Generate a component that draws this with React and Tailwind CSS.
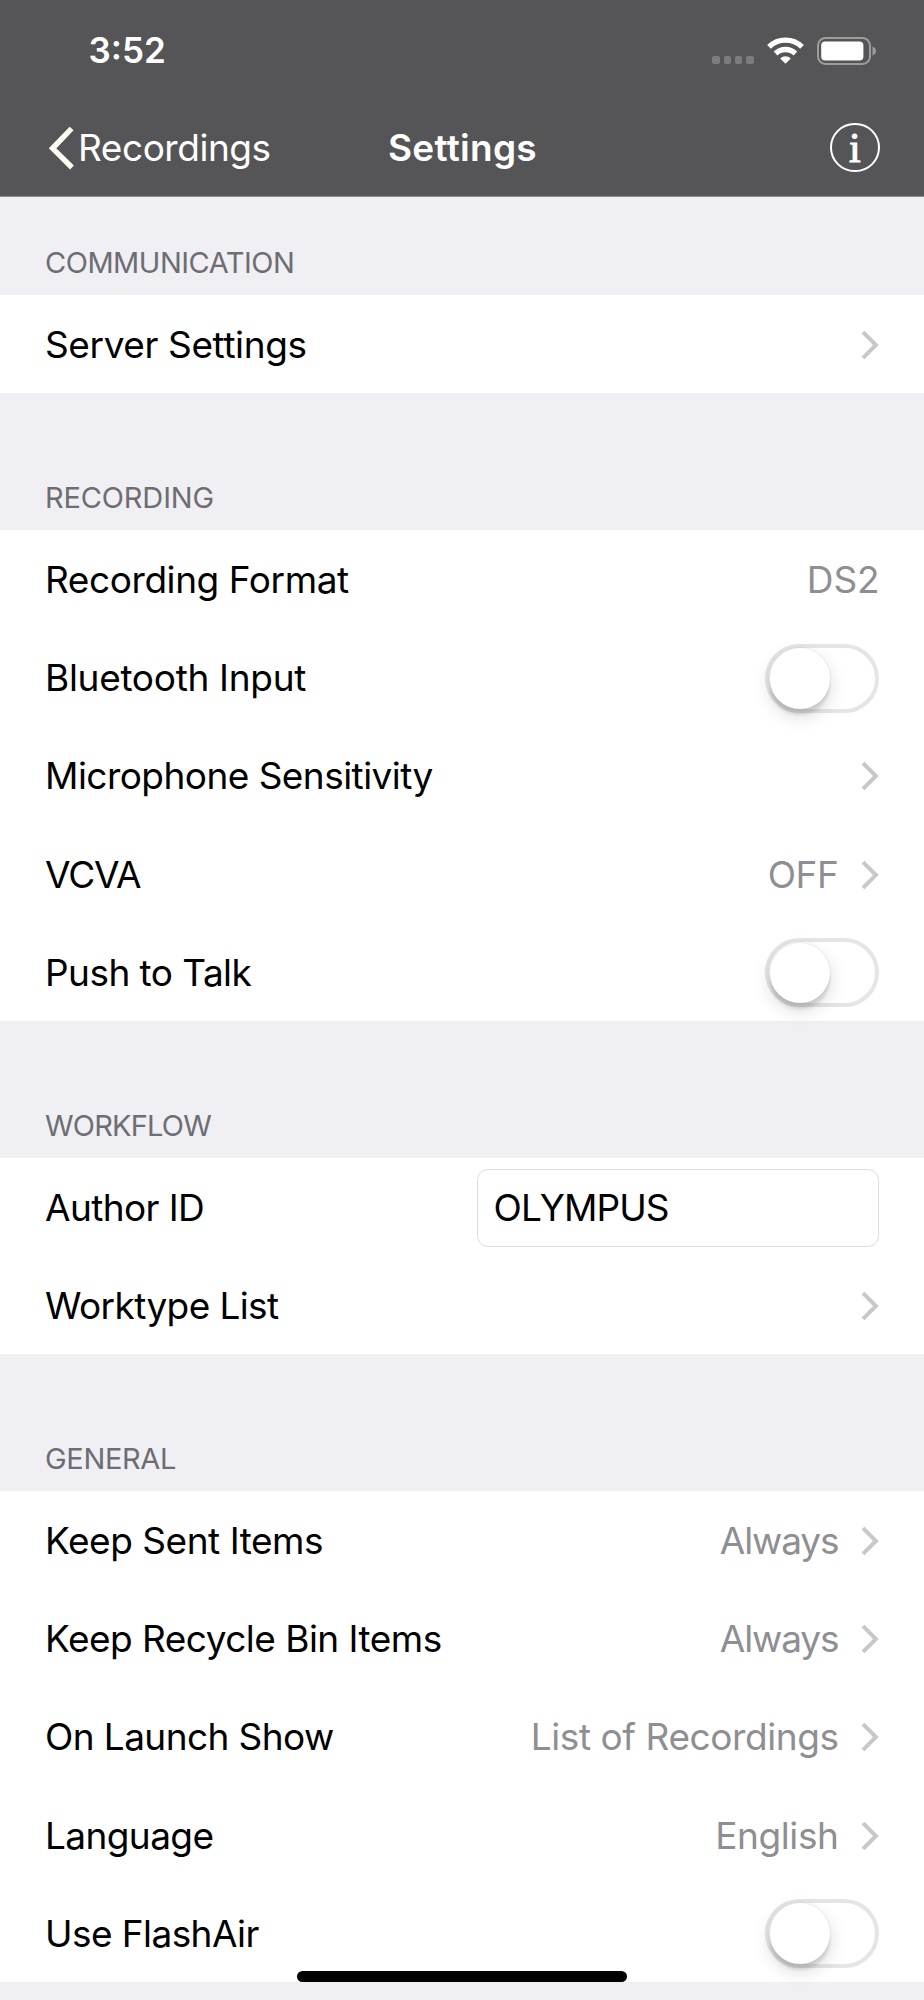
function Chevron() {
  return (
    <svg className="h-[30px] w-[18px] shrink-0" viewBox="0 0 18 30" fill="none" aria-hidden="true">
      <path d="M2 2.1 14.9 15 2 27.9" stroke="#c7c7cc" strokeWidth="4" />
    </svg>
  );
}

function Switch() {
  return (
    <button
      type="button"
      role="switch"
      aria-checked="false"
      className="mt-[2px] flex h-[69px] w-[114px] shrink-0 items-center rounded-full border-[4px] border-[#e5e5e5] bg-white"
    >
      <span className="ml-[0.5px] size-[60.5px] shrink-0 rounded-full bg-white shadow-[0_7px_18px_rgba(0,0,0,0.15),0_6px_3px_rgba(0,0,0,0.1),0_0_2px_rgba(0,0,0,0.12)]" />
    </button>
  );
}

function Row({ label, className, value, valueClass, chevron, children }) {
  return (
    <div className="flex h-[98.2px] items-center justify-between pr-[45px] pl-[45px] whitespace-nowrap">
      <span className={`mt-[2px] ${className}`}>{label}</span>
      <div className="flex items-center gap-[22.5px]">
        {value && <span className={`mt-[2px] text-[#8e8e93] ${valueClass}`}>{value}</span>}
        {chevron && <span className="mt-[2px]"><Chevron /></span>}
        {children}
      </div>
    </div>
  );
}

function Section({ title, titleClass, headClass, children }) {
  return (
    <section>
      <div className={`flex items-end pl-[45px] ${headClass}`}>
        <h2 className={`text-[29px] leading-10 text-[#6d6d72] ${titleClass}`}>{title}</h2>
      </div>
      <div className="bg-white">{children}</div>
    </section>
  );
}

function StatusBar() {
  return (
    <div className="flex h-[98px] items-center justify-between pt-[3px] pr-[47.5px] pl-[88.5px]">
      <span className="text-[35px] leading-none font-semibold">3:52</span>
      <div className="flex items-center">
        <div className="mt-[19px] mr-[13px] flex gap-[3.3px]">
          <span className="size-[7.8px] rounded-[2px] bg-[#7c7c7e]" />
          <span className="size-[7.8px] rounded-[2px] bg-[#7c7c7e]" />
          <span className="size-[7.8px] rounded-[2px] bg-[#7c7c7e]" />
          <span className="size-[7.8px] rounded-[2px] bg-[#7c7c7e]" />
        </div>
        <svg className="mr-[13px] h-[27px] w-[37px]" viewBox="0 0 37 27" aria-hidden="true">
          <g fill="none" stroke="#fff" strokeWidth="5.3">
            <path d="M2 9.9A23.6 23.6 0 0 1 35 9.9" />
            <path d="M8.6 16.5A14.2 14.2 0 0 1 28.4 16.5" />
          </g>
          <path d="M13.2 21.4a7.6 7.6 0 0 1 10.6 0L18.5 26.8Z" fill="#fff" />
        </svg>
        <svg className="h-7 w-[60px]" viewBox="0 0 60 28" aria-hidden="true">
          <rect x="1" y="1" width="52" height="26" rx="7.5" fill="none" stroke="#9c9c9d" strokeWidth="2" />
          <rect x="4.2" y="4.6" width="42.2" height="19" rx="4" fill="#fff" />
          <path d="M55.5 9.5c2.2.7 3.5 2.4 3.5 4.5s-1.3 3.8-3.5 4.5Z" fill="#9c9c9d" />
        </svg>
      </div>
    </div>
  );
}

function NavBar() {
  return (
    <div className="grid h-[98px] grid-cols-[1fr_auto_1fr] items-center pr-[44.5px] pl-[47.5px]">
      <div className="flex items-center">
        <svg className="mt-px h-[44px] w-[26px]" viewBox="0 0 26 44" fill="none" aria-hidden="true">
          <path d="M23.6 2.5 4.6 22.3 24 41.5" stroke="#fffdf3" strokeWidth="5.4" />
        </svg>
        <span className="mt-[2px] ml-[4.5px] tracking-[-0.45px]">Recordings</span>
      </div>
      <h1 className="mt-px mr-px -ml-px font-semibold tracking-[0.28px]">Settings</h1>
      <div className="mt-px flex size-[49.5px] items-center justify-center justify-self-end rounded-full border-2 border-white">
        <span className="font-['Liberation_Serif',serif] text-[42px] leading-none [-webkit-text-stroke:1.1px_white]">i</span>
      </div>
    </div>
  );
}

export default function App() {
  return (
    <div className="relative h-[2000px] w-[924px] overflow-hidden bg-[#efeff4] font-['Inter',sans-serif] text-[37px] leading-[44px] text-black">
      <header className="h-[197px] border-b border-[#8d8d90] bg-[#555557] text-white">
        <StatusBar />
        <NavBar />
      </header>

      <Section title="COMMUNICATION" titleClass="tracking-[-0.48px]" headClass="h-[98px] pb-[12.5px]">
        <Row label="Server Settings" className="tracking-[-0.39px]" chevron />
      </Section>

      <Section title="RECORDING" titleClass="tracking-[-0.15px]" headClass="h-[136.8px] pb-[12px]">
        <Row label="Recording Format" className="tracking-[-0.42px]" value="DS2" valueClass="-mr-[0.5px] tracking-[-0.1px]" />
        <Row label="Bluetooth Input" className="tracking-[-0.3px]"><Switch /></Row>
        <Row label="Microphone Sensitivity" className="tracking-[-0.54px]" chevron />
        <Row label="VCVA" className="tracking-[-1.1px]" value="OFF" valueClass="tracking-[-0.4px]" chevron />
        <Row label="Push to Talk" className="tracking-[-0.55px]"><Switch /></Row>
      </Section>

      <Section title="WORKFLOW" titleClass="tracking-[-0.8px]" headClass="h-[136.8px] pb-[12px]">
        <Row label="Author ID" className="tracking-[-0.6px]">
          <div className="mt-[2px] flex h-[78px] w-[402px] items-center rounded-[11px] border border-[#dcdcdd] pl-[15.5px] tracking-[-0.9px]">OLYMPUS</div>
        </Row>
        <Row label="Worktype List" className="tracking-[-0.6px]" chevron />
      </Section>

      <Section title="GENERAL" titleClass="tracking-[-0.34px]" headClass="h-[136.8px] pb-[12px]">
        <Row label="Keep Sent Items" className="tracking-[-0.46px]" value="Always" valueClass="tracking-[-1.1px]" chevron />
        <Row label="Keep Recycle Bin Items" className="tracking-[-0.52px]" value="Always" valueClass="tracking-[-1.1px]" chevron />
        <Row label="On Launch Show" className="tracking-[-0.58px]" value="List of Recordings" valueClass="tracking-[-0.43px]" chevron />
        <Row label="Language" className="tracking-[-0.6px]" value="English" valueClass="tracking-[-0.4px]" chevron />
        <Row label="Use FlashAir" className="tracking-[-0.57px]"><Switch /></Row>
      </Section>

      <div className="absolute bottom-[18px] left-[297px] h-[11px] w-[330px] rounded-full bg-black" />
    </div>
  );
}
